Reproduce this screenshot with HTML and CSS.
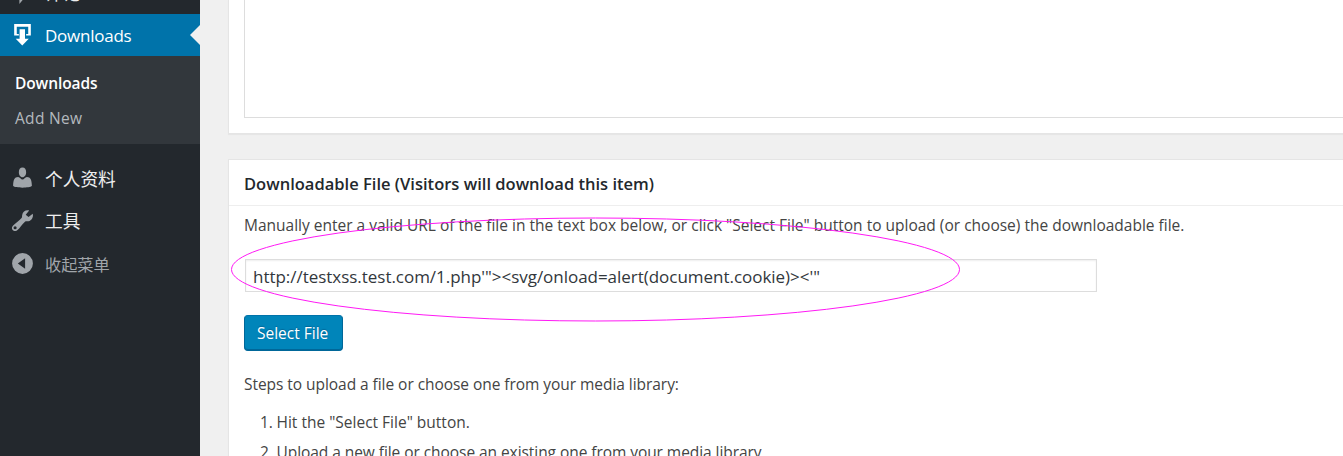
FILE: index.html
```html
<!DOCTYPE html>
<html lang="zh-CN">
<head>
<meta charset="utf-8">
<title>Downloads</title>
<link rel="stylesheet" href="styles.css">
</head>
<body>
<div class="admin">
  <nav class="sidebar">
    <a class="item item-top">
      <svg class="icon" viewBox="0 0 24 24"><path d="M4 4h16v12h-6l-5 6v-6H4z"/></svg>
      <span class="cjk">评论</span>
    </a>
    <a class="item item-current">
      <svg class="icon" viewBox="0 0 24 24"><path d="M4 1h16v11h-4.500v-1.500h2V3.500h-11v7h2V12H4z"/><path d="M9.200 6h5.200v9H18l-6.200 6.500L5.500 15h3.700z"/></svg>
      <span class="current-label">Downloads</span>
    </a>
    <div class="submenu">
      <a class="sub sub-active">Downloads</a>
      <a class="sub sub-plain">Add New</a>
    </div>
    <a class="item">
      <svg class="icon icon-user" viewBox="0 0 24 24"><path d="M12 1.500c2.300 0 3.500 2 3.500 4.500S14.200 10.800 12 10.800 8.500 8.500 8.500 6 9.700 1.500 12 1.500zM7.800 10.500c1.700 0 2.700 2.500 4.200 2.500s2.500-2.500 4.200-2.500c3.500 0 4.800 3 4.800 8.800-2 2-16 2-18 0 0-5.800 1.300-8.800 4.800-8.800z"/></svg>
      <span class="cjk">个人资料</span>
    </a>
    <a class="item">
      <svg class="icon icon-tool" viewBox="0 0 24 24"><path d="M21.800 5.500l-4 3.200-2.700-2.300 3.300-4c-3-.9-6.300 1-6.700 4.300-.2 1 0 2-.4 2.700-2 2.600-6 5-8.500 7.700-2.700 2.900 1 6.800 4.100 4.300 2.700-2.200 4.800-6.200 7.500-8.300 1-.6 2.100-.1 3.300-.4 3.100-.6 5.100-4.200 4.100-7.200zM4.900 17.500a1.500 1.500 0 1 1 0 3 1.500 1.500 0 0 1 0-3z" fill-rule="evenodd"/></svg>
      <span class="cjk">工具</span>
    </a>
    <a class="item collapse">
      <svg class="icon icon-collapse" viewBox="0 0 24 24"><path d="M12 2a10 10 0 1 1 0 20 10 10 0 0 1 0-20zM14.500 7l-7 5 7 5z" fill-rule="evenodd"/></svg>
      <span class="cjk">收起菜单</span>
    </a>
  </nav>
  <main class="content">
    <section class="box editor"><div class="textarea"></div></section>
    <section class="box">
      <h2 class="title"><span>Downloadable File (Visitors will download this item)</span></h2>
      <div class="inside">
        <p class="intro"><span>Manually enter a valid URL of the file in the text box below, or click "Select File" button to upload (or choose) the downloadable file.</span></p>
        <div class="field"><span>http://testxss.test.com/1.php'"&gt;&lt;svg/onload=alert(document.cookie)&gt;&lt;'"</span></div>
        <a class="button">Select File</a>
        <p class="steps"><span>Steps to upload a file or choose one from your media library:</span></p>
        <ol class="list">
          <li><span class="num">1.</span><span class="step-one">Hit the "Select File" button.</span></li>
          <li><span class="num">2.</span><span class="step-two">Upload a new file or choose an existing one from your media library.</span></li>
        </ol>
      </div>
    </section>
  </main>
  <svg class="annotation" viewBox="0 0 731 105"><ellipse cx="365.500" cy="52.500" rx="364" ry="51.500"/></svg>
</div>
</body>
</html>
```
FILE: styles.css
```css
* { box-sizing: border-box; }
body { margin: 0; background: #f0f0f0; font-family: "Open Sans", "Noto Sans CJK SC", sans-serif; font-size: 15.5px; color: #444; }
.admin { position: relative; display: flex; width: 1343px; height: 456px; overflow: hidden; }
.sidebar { width: 200px; height: 456px; flex: none; background: #23282d; overflow: hidden; }
.item { display: flex; align-items: center; height: 42px; padding-left: 10px; color: #eee; font-size: 17px; white-space: nowrap; }
.icon { width: 25px; height: 25px; flex: none; margin-right: 10px; fill: #a0a5aa; }
.icon-user, .icon-tool { margin-bottom: 2px; }
.icon-collapse { margin-bottom: 3px; }
.cjk { font-family: "Noto Sans CJK SC", sans-serif; font-size: 17.7px; line-height: 40px; padding-bottom: 2px; }
.item-top { margin-top: -28px; }
.item-current { position: relative; background: #0073aa; color: #fff; }
.item-current .icon { fill: #fff; }
.current-label { letter-spacing: -.25px; }
.item-current::after { content: ""; position: absolute; right: 0; top: 11px; border: 10px solid transparent; border-left: 0; border-right-color: #f0f0f0; }
.submenu { height: 88px; margin-bottom: 14px; padding: 10px 15px; background: #32373c; }
.sub { display: block; height: 35px; line-height: 35px; font-size: 15.5px; white-space: nowrap; }
.sub-active { color: #fff; font-weight: 600; letter-spacing: -.1px; }
.sub-plain { color: #b4b9be; letter-spacing: .3px; }
.collapse { height: 46px; color: #a0a5aa; }
.collapse .cjk { font-size: 16.2px; }
.content { width: 1115px; flex: none; margin-left: 28px; }
.box { width: 1140px; background: #fff; border: 1px solid #e5e5e5; box-shadow: 0 1px 1px rgba(0,0,0,.04); }
.editor { height: 134px; margin-bottom: 25px; border-top: 0; padding-left: 15px; }
.textarea { height: 118px; border: 1px solid #ddd; border-top: 0; }
.title { height: 46px; margin: 0; padding-left: 15px; border-bottom: 1px solid #eee; font-size: 16.5px; font-weight: 600; line-height: 47px; color: #23282d; white-space: nowrap; letter-spacing: .01px; }
.inside { padding: 0 15px; }
.intro, .steps { margin: 0; height: 24px; line-height: 24px; white-space: nowrap; }
.intro { margin-top: 7px; }
.field { width: 852px; height: 33px; margin: 22px 0 23px 1px; padding-left: 7px; border: 1px solid #ddd; box-shadow: inset 0 1px 2px rgba(0,0,0,.07); color: #32373c; font-size: 17px; line-height: 33px; white-space: nowrap; letter-spacing: -.03px; }
.button { display: block; width: 99px; height: 36px; padding-left: 12px; border: 1px solid #006799; border-top-color: #0073aa; border-radius: 4px; background: #0085ba; box-shadow: inset 0 -1px 0 #006799; color: #fff; line-height: 35px; text-shadow: 0 -1px 1px #006799; white-space: nowrap; }
.steps { margin-top: 21px; letter-spacing: -.05px; }
.list { margin: 14px 0 0; padding: 0; list-style: none; }
.list li { display: flex; height: 30px; line-height: 24px; white-space: nowrap; }
.num { width: 32.5px; padding-left: 16px; flex: none; }
.step-two { letter-spacing: -.06px; }
.annotation { position: absolute; left: 230px; top: 217px; width: 731px; height: 105px; }
.annotation ellipse { fill: none; stroke: #ff19f5; stroke-width: 1; }
```
